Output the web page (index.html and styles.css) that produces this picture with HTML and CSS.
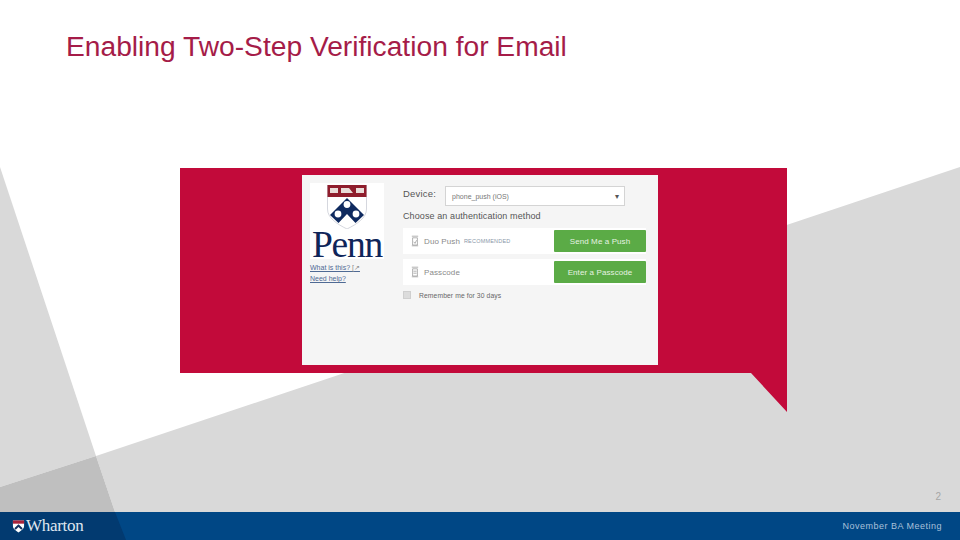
FILE: index.html
```html
<!DOCTYPE html>
<html lang="en">
<head>
<meta charset="utf-8">
<title>Enabling Two-Step Verification for Email</title>
<link rel="stylesheet" href="styles.css">
</head>
<body>
<div class="slide">
  <svg class="backdrop" viewBox="0 0 960 540" width="960" height="540" aria-hidden="true">
    <polygon class="bg-light" points="960,167 960,512 115,512 96,456"/>
    <polygon class="bg-light" points="0,167 96,456 0,487"/>
    <polygon class="bg-dark" points="0,487 96,456 115,512 0,512"/>
    <polygon class="callout" points="180,168 787,168 787,412 751,373 180,373"/>
  </svg>
  <h1 class="title">Enabling Two-Step Verification for Email</h1>
  <main class="stage">
    <section class="duo">
      <div class="brand">
        <div class="logo">
          <svg class="shield" viewBox="0 0 40 44" width="40" height="44" aria-hidden="true">
            <path d="M.5 0H39.500V24C39.500 33 30 39 20 44C10 39 .5 33 .5 24Z" fill="#fff" stroke="#b8bcc8" stroke-width=".6"/>
            <rect x=".5" y="0" width="39" height="12" fill="#8f1d2c"/>
            <path d="M3 3h8v5H3zM14 3h8l4 5H14zM29 3h8v5h-8z" fill="#e9dcd8"/>
            <path d="M20 13L37 30L28.500 38L20 29L11.500 38L3 30Z" fill="#0f2a5f"/>
            <circle cx="20" cy="19.500" r="3.400" fill="#fff"/>
            <circle cx="11" cy="29" r="3.400" fill="#fff"/>
            <circle cx="29" cy="29" r="3.400" fill="#fff"/>
          </svg>
          <span class="penn">Penn</span>
        </div>
        <a class="link">What is this? <span class="ext">[↗</span></a>
        <a class="link">Need help?</a>
      </div>
      <div class="form">
        <div class="device-row">
          <span class="device-label">Device:</span>
          <div class="select"><span>phone_push (iOS)</span><span class="caret">▾</span></div>
        </div>
        <p class="choose">Choose an authentication method</p>
        <div class="method">
          <div class="method-info">
            <svg class="glyph" viewBox="0 0 10 14" width="8" height="12" aria-hidden="true"><path d="M1 1h8M2 3h6v9H2zM1 13h8M3.500 8l1.500 2 2-4" fill="none" stroke="#888" stroke-width=".8"/></svg>
            <span class="method-name">Duo Push</span><span class="tag">RECOMMENDED</span>
          </div>
          <button class="action">Send Me a Push</button>
        </div>
        <div class="method">
          <div class="method-info">
            <svg class="glyph" viewBox="0 0 10 14" width="8" height="12" aria-hidden="true"><path d="M1 1h8M2 3h6v9H2zM1 13h8M3 6h4M3 8.500h4" fill="none" stroke="#888" stroke-width=".8"/></svg>
            <span class="method-name">Passcode</span>
          </div>
          <button class="action">Enter a Passcode</button>
        </div>
        <label class="remember"><span class="check"></span>Remember me for 30 days</label>
      </div>
    </section>
  </main>
  <div class="page-no">2</div>
  <footer class="footer">
    <div class="footer-shade"></div>
    <div class="wharton">
      <svg viewBox="0 0 14 14" width="13" height="14" aria-hidden="true">
        <path d="M1 1H13V7C13 10 10 12 7 14C4 12 1 10 1 7Z" fill="#fff"/>
        <rect x="1" y="1" width="12" height="3.500" fill="#a8233a"/>
        <path d="M7 5L11.500 9.500 10 11 7 8 4 11 2.500 9.500Z" fill="#12305f"/>
      </svg>
      <span class="wordmark">Wharton</span>
    </div>
    <span class="meeting">November BA Meeting</span>
  </footer>
</div>
</body>
</html>
```
FILE: styles.css
```css
* { box-sizing: border-box; }
html, body { margin: 0; padding: 0; }
body { background: #fff; font-family: "Liberation Sans", Arial, sans-serif; }

.slide {
  position: relative;
  width: 960px;
  height: 540px;
  overflow: hidden;
  display: flex;
  flex-direction: column;
  background: #fff;
}
.backdrop { position: absolute; left: 0; top: 0; }
.bg-light { fill: #d9d9d9; }
.bg-dark { fill: #bfbfbf; }
.callout { fill: #c20a3a; }

.title {
  position: relative;
  margin: 0;
  height: 175px;
  padding: 30px 0 0 66px;
  font-size: 28.2px;
  line-height: 32px;
  font-weight: 400;
  color: #a51c48;
}

.stage {
  position: relative;
  flex: 1;
  padding-left: 302px;
}
.duo {
  width: 356px;
  height: 190px;
  background: #f5f5f5;
  display: flex;
  padding: 8px 12px 0 8px;
  gap: 19px;
}
.brand { width: 74px; display: flex; flex-direction: column; }
.logo {
  height: 76px;
  background: #fff;
  display: flex;
  flex-direction: column;
  align-items: center;
  margin-bottom: 3px;
}
.shield { margin-top: 2px; flex: none; }
.penn {
  margin-top: 2px;
  font-family: "Liberation Serif", "Times New Roman", serif;
  font-size: 37.5px;
  line-height: 28px;
  letter-spacing: -1.2px;
  color: #0f2559;
}
.link {
  font-size: 7px;
  line-height: 11px;
  color: #4f6a94;
  text-decoration: underline;
}
.ext { color: #8a8a8a; text-decoration: none; }

.form { flex: 1; display: flex; flex-direction: column; }
.device-row { display: flex; align-items: flex-start; gap: 9px; height: 23px; padding-top: 3px; }
.device-label { font-size: 9.500px; line-height: 15px; margin-top: -3px; padding-top: 3px; color: #555; letter-spacing: .2px; }
.select {
  width: 180px;
  height: 20px;
  background: #fff;
  border: 1px solid #d4d4d4;
  display: flex;
  align-items: center;
  justify-content: space-between;
  padding: 0 5px 0 6px;
  font-size: 7px;
  color: #777;
}
.caret { font-size: 8px; color: #555; }
.choose { margin: 4px 0 5px; font-size: 9px; line-height: 13px; color: #555; letter-spacing: .1px; }
.method {
  display: flex;
  justify-content: space-between;
  align-items: center;
  height: 26px;
  background: #fff;
  margin-bottom: 5px;
}
.method-info { display: flex; align-items: center; padding-left: 8px; }
.glyph { flex: none; margin-right: 5px; }
.method-name { font-size: 8px; color: #8a8a8a; letter-spacing: .1px; }
.tag { font-size: 5.500px; color: #8a97a8; margin-left: 4px; letter-spacing: .2px; }
.action {
  width: 92px;
  height: 22px;
  border: 0;
  border-radius: 1px;
  padding: 0;
  background: #5bab46;
  color: #e6f2e2;
  font: 8px "Liberation Sans", Arial, sans-serif;
  letter-spacing: .1px;
}
.remember {
  display: flex;
  align-items: center;
  gap: 8px;
  margin-top: 1px;
  font-size: 6.750px;
  color: #666;
  letter-spacing: .1px;
}
.check { width: 8px; height: 8px; background: #dcdcdc; border: 1px solid #cfcfcf; }

.page-no {
  position: absolute;
  right: 19px;
  top: 491px;
  font-size: 10px;
  line-height: 12px;
  color: #a6a6a6;
}
.footer {
  position: relative;
  height: 28px;
  flex: none;
  background: #004785;
  display: flex;
  align-items: center;
  justify-content: space-between;
  padding: 0 18px 0 12px;
}
.footer-shade {
  position: absolute;
  left: 0;
  top: 0;
  width: 126px;
  height: 28px;
  background: #023a70;
  clip-path: polygon(0 0, 115px 0, 126px 28px, 0 28px);
}
.wharton { position: relative; display: flex; align-items: center; gap: 1px; }
.wordmark {
  font-family: "Liberation Serif", "Times New Roman", serif;
  font-size: 17px;
  line-height: 20px;
  letter-spacing: -.3px;
  color: #dfe6ef;
}
.meeting {
  position: relative;
  font-size: 9px;
  letter-spacing: .5px;
  color: #a9c0da;
}
```
